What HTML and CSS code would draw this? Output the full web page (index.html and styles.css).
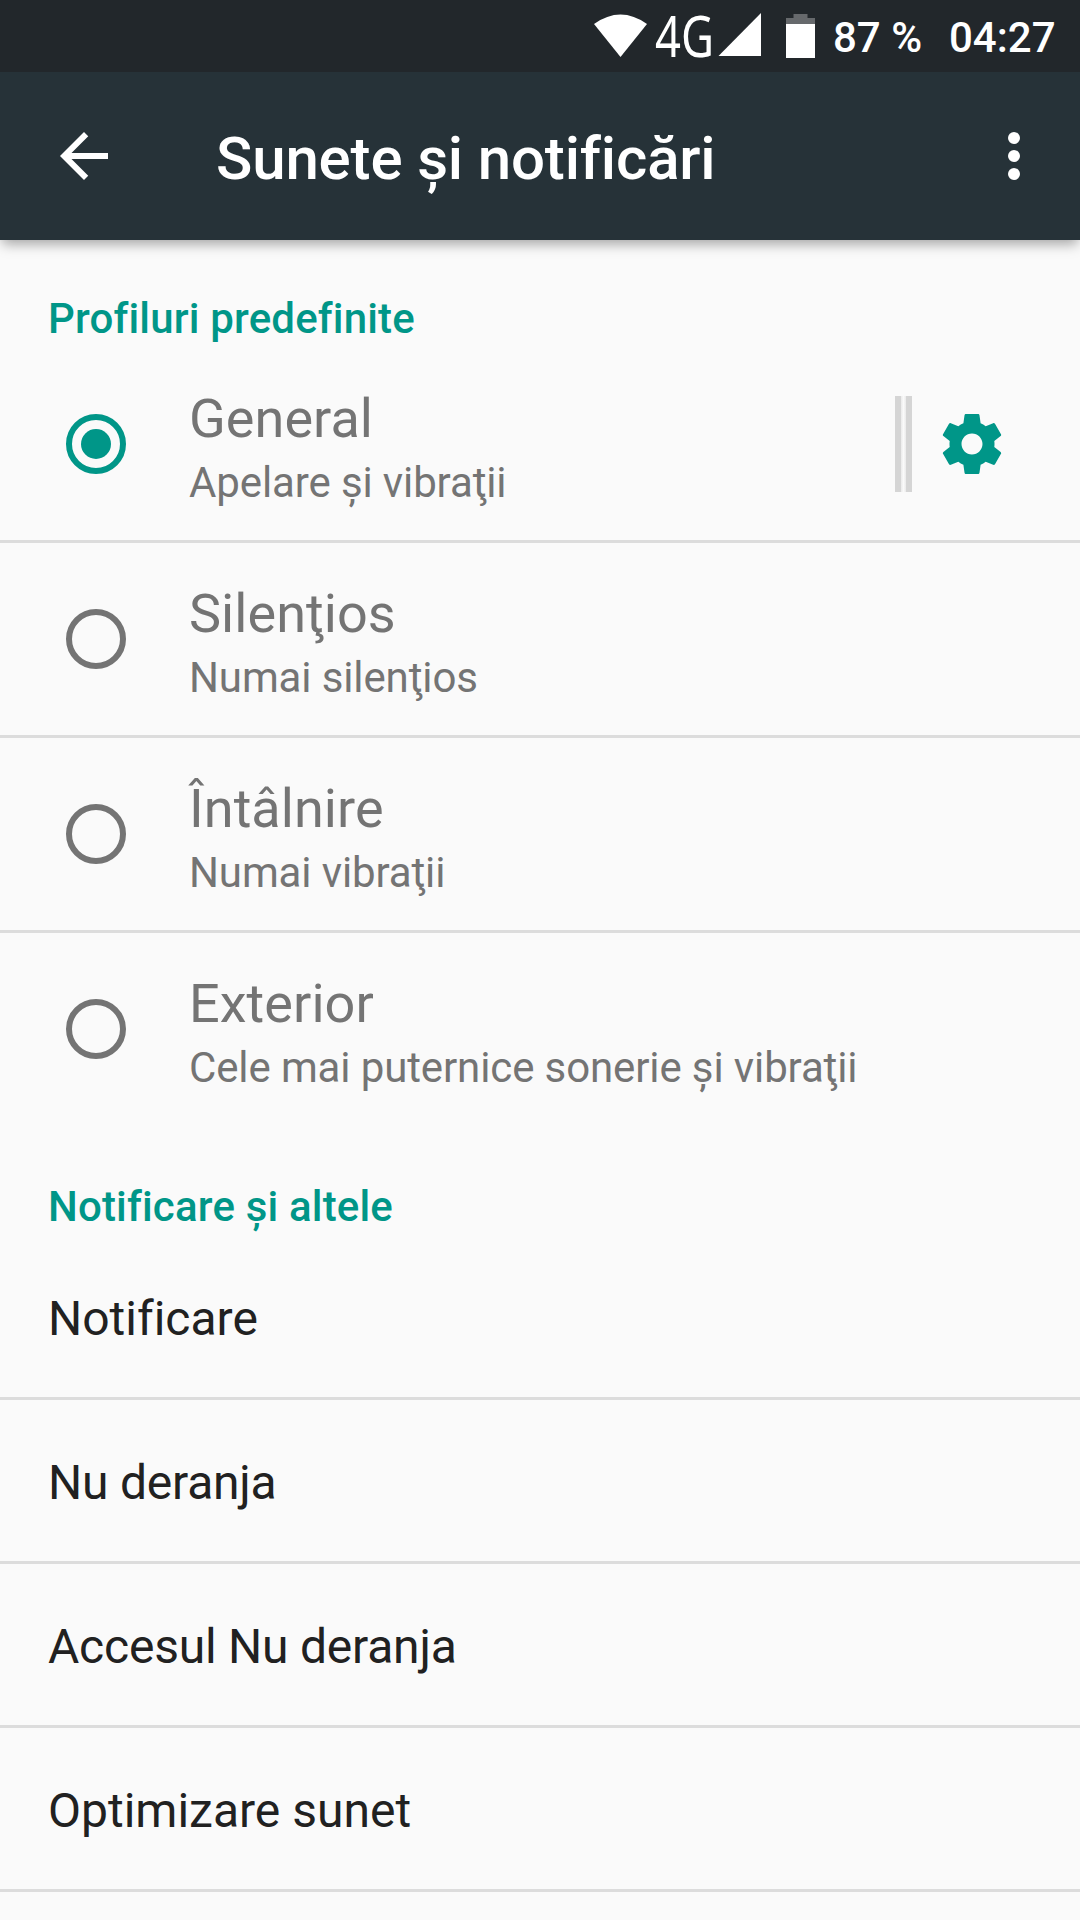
FILE: index.html
```html
<!DOCTYPE html>
<html lang="ro">
<head>
<meta charset="utf-8">
<title>Sunete și notificări</title>
<link rel="stylesheet" href="styles.css">
</head>
<body>
<div class="status-bar">
  <svg class="status-icons" width="240" height="72" viewBox="588 0 240 72">
    <path fill="#fff" d="M594 24Q620.500 5 647 24L620.500 57Z"/>
    <text class="network" x="655" y="57" textLength="59" lengthAdjust="spacingAndGlyphs">4G</text>
    <path fill="#fff" d="M761 13V56H718.500Z"/>
    <path fill="#66696c" d="M793.500 14h14v4h7.500v6h-29v-6h7.500z"/>
    <path fill="#fff" d="M786 24h29v34h-29z"/>
  </svg>
  <span class="battery">87 %</span>
  <span class="clock">04:27</span>
</div>
<header class="toolbar">
  <svg class="icon" viewBox="0 0 24 24"><path fill="#fff" d="M20 11H7.830l5.590-5.590L12 4l-8 8 8 8 1.410-1.410L7.830 13H20v-2z"/></svg>
  <h1 class="title">Sunete și notificări</h1>
  <svg class="icon" viewBox="0 0 24 24" fill="#fff"><circle cx="12" cy="6" r="2"/><circle cx="12" cy="12" r="2"/><circle cx="12" cy="18" r="2"/></svg>
</header>
<main>
  <h2 class="section">Profiluri predefinite</h2>
  <div class="profile">
    <span class="radio checked"></span>
    <div class="label"><div class="name">General</div><div class="summary">Apelare și vibraţii</div></div>
    <span class="separator"></span>
    <svg class="icon" viewBox="0 0 24 24"><path fill="#009688" d="M19.430 12.980c.04-.32.070-.64.070-.98s-.03-.66-.07-.98l2.110-1.650c.19-.15.240-.42.120-.64l-2-3.460c-.12-.22-.39-.3-.61-.22l-2.490 1c-.52-.4-1.080-.73-1.690-.98l-.38-2.650C14.460 2.180 14.250 2 14 2h-4c-.25 0-.46.180-.49.420l-.38 2.650c-.61.250-1.170.590-1.690.980l-2.490-1c-.23-.09-.49 0-.61.220l-2 3.460c-.13.220-.07.490.120.640l2.110 1.650c-.04.320-.07.650-.07.980s.03.660.070.980l-2.110 1.650c-.19.150-.24.420-.12.640l2 3.460c.12.220.390.300.610.220l2.490-1c.52.400 1.080.730 1.690.980l.38 2.650c.03.240.240.420.490.420h4c.25 0 .460-.18.490-.42l.38-2.650c.61-.25 1.170-.59 1.690-.98l2.490 1c.23.090.490 0 .610-.22l2-3.460c.12-.22.070-.49-.12-.64l-2.110-1.650zM12 15.500c-1.930 0-3.500-1.570-3.500-3.500s1.570-3.500 3.500-3.500 3.500 1.570 3.500 3.500-1.570 3.500-3.500 3.500z"/></svg>
  </div>
  <div class="profile">
    <span class="radio"></span>
    <div class="label"><div class="name">Silenţios</div><div class="summary">Numai silenţios</div></div>
  </div>
  <div class="profile">
    <span class="radio"></span>
    <div class="label"><div class="name">Întâlnire</div><div class="summary">Numai vibraţii</div></div>
  </div>
  <div class="profile last">
    <span class="radio"></span>
    <div class="label"><div class="name">Exterior</div><div class="summary">Cele mai puternice sonerie și vibraţii</div></div>
  </div>
  <h2 class="section">Notificare și altele</h2>
  <div class="item">Notificare</div>
  <div class="item tight">Nu deranja</div>
  <div class="item tight">Accesul Nu deranja</div>
  <div class="item">Optimizare sunet</div>
</main>
</body>
</html>
```
FILE: styles.css
```css
* { box-sizing: border-box; }

body {
  margin: 0;
  width: 1080px;
  height: 1920px;
  overflow: hidden;
  background: #fafafa;
  font-family: Roboto, sans-serif;
  font-variant-ligatures: none;
}

h1, h2 { margin: 0; font-weight: 500; }

.status-bar {
  position: relative;
  z-index: 1;
  display: flex;
  height: 72px;
  padding-left: 588px;
  background: #22272b;
  color: #fff;
  font-size: 42px;
  font-weight: 500;
  line-height: 75px;
  white-space: nowrap;
}
.status-icons { flex: none; overflow: visible; }
.network { fill: #fff; font: 400 57px "Noto Sans", sans-serif; }
.battery { width: 116px; padding-left: 5px; }
.clock { padding-left: 5px; }

.toolbar {
  display: flex;
  align-items: center;
  height: 168px;
  padding: 0 30px 0 48px;
  background: #263238;
  box-shadow: 0 6px 12px -2px rgba(0, 0, 0, .35);
}
.title {
  flex: 1;
  padding: 5px 0 0 96px;
  color: #fff;
  font-size: 60px;
  line-height: 70px;
  letter-spacing: -.16px;
}
.icon { flex: none; width: 72px; height: 72px; }

.section {
  height: 108px;
  padding: 54px 48px 0;
  color: #009688;
  font-size: 42px;
  line-height: 50px;
  letter-spacing: .17px;
}

.profile {
  display: flex;
  align-items: center;
  height: 195px;
  padding: 0 72px 0 66px;
  border-bottom: 3px solid #dcdcdc;
  color: #747474;
}
.profile.last { border-bottom-color: transparent; }

.radio {
  display: flex;
  width: 60px;
  height: 60px;
  border: 6px solid #747474;
  border-radius: 50%;
}
.radio.checked { border-color: #009688; }
.radio.checked::before {
  content: "";
  width: 30px;
  height: 30px;
  margin: auto;
  border-radius: 50%;
  background: #009688;
}

.label { flex: 1; padding: 9px 0 0 63px; }
.name { font-size: 54px; line-height: 68px; letter-spacing: .06px; }
.summary { font-size: 42px; line-height: 60px; letter-spacing: -.12px; }

.separator {
  width: 17px;
  height: 96px;
  margin-right: 24px;
  border: solid #d5d5d5;
  border-width: 0 6px;
  background: linear-gradient(90deg, #eaeaea, #fafafa 50%, #eaeaea);
}

.item {
  height: 164px;
  padding: 4px 48px 0;
  border-bottom: 3px solid #dcdcdc;
  color: #212121;
  font-size: 48px;
  line-height: 157px;
}
.item.tight { letter-spacing: -.22px; }
```
